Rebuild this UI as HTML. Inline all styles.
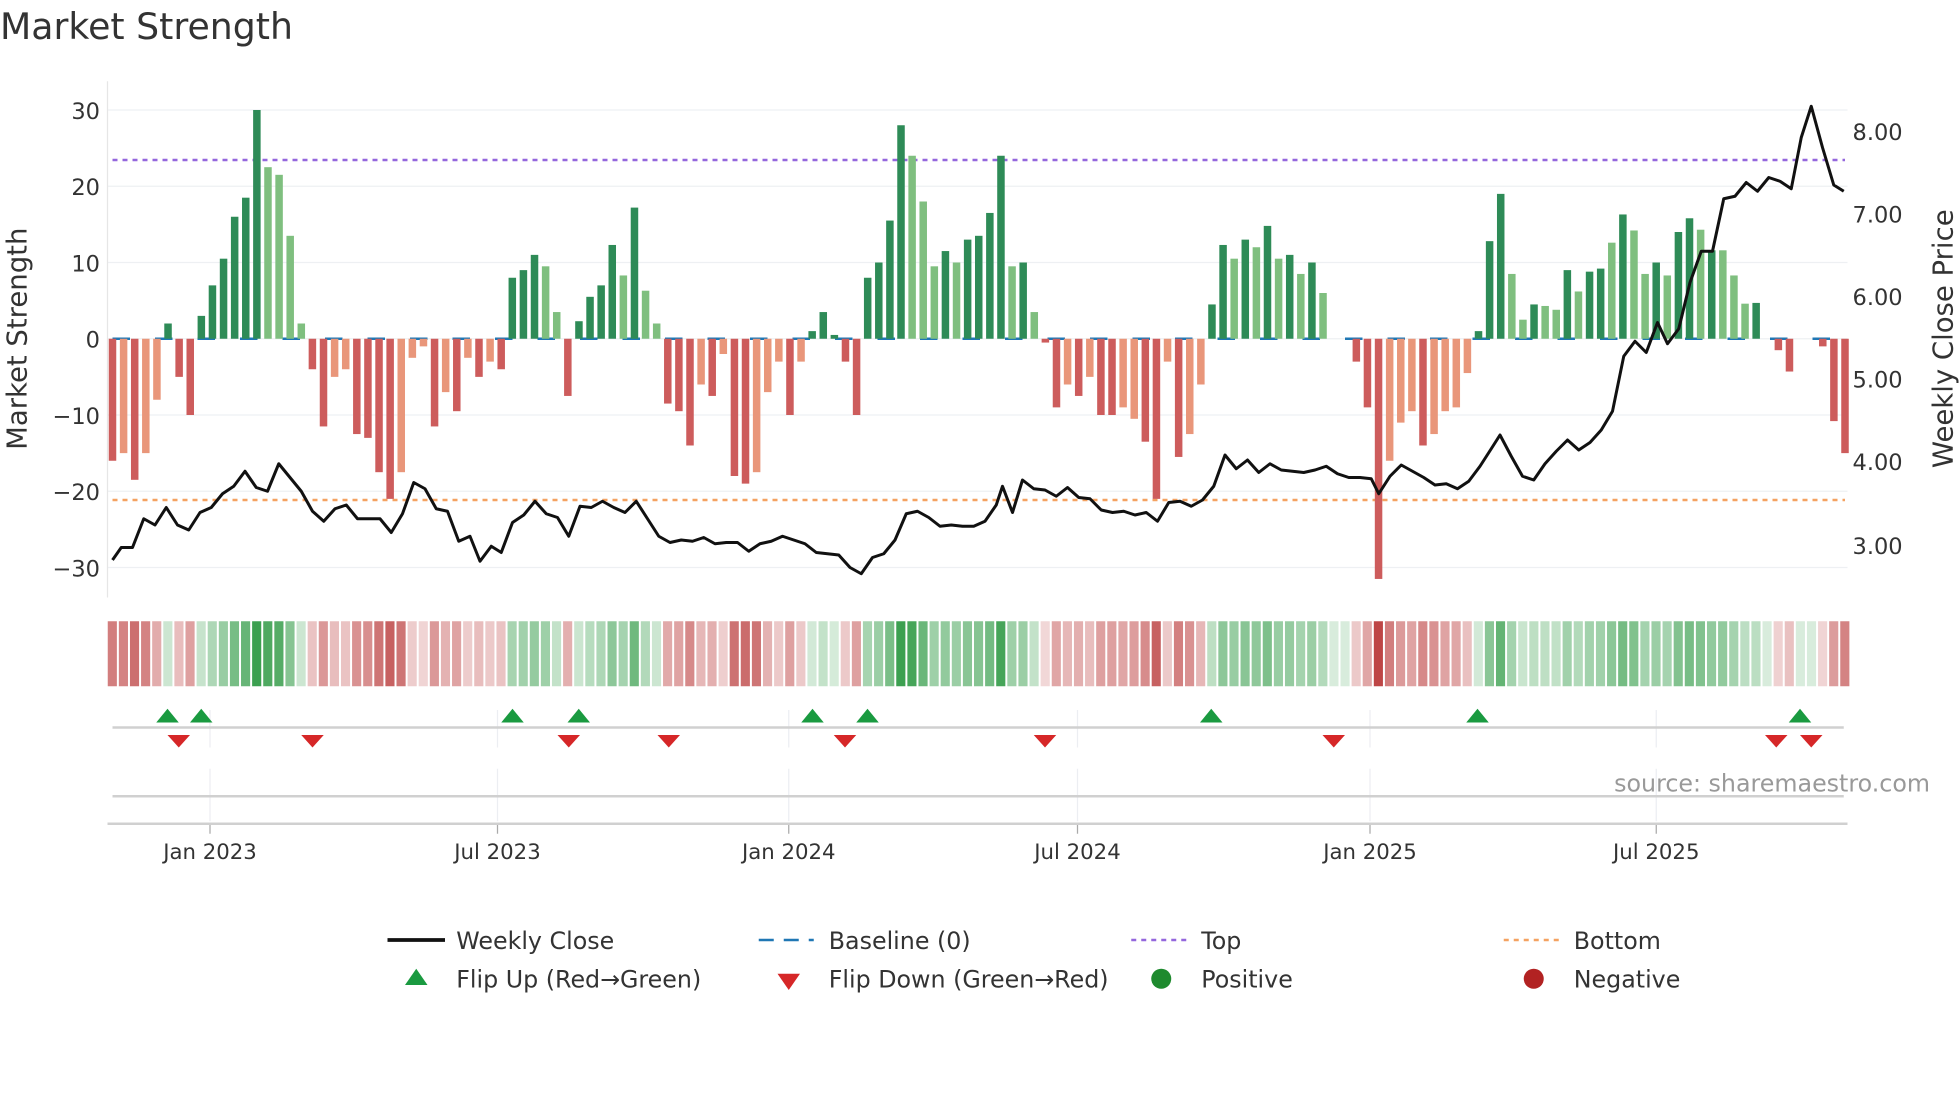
<!DOCTYPE html>
<html><head><meta charset="utf-8"><style>
html,body{margin:0;padding:0;background:#fff;width:1960px;height:1102px;overflow:hidden}
svg{display:block}
text{font-family:"DejaVu Sans","Liberation Sans",sans-serif;fill:#333}
</style></head><body>
<svg id="s" width="1960" height="1102" viewBox="0 0 1568 881.6" xmlns="http://www.w3.org/2000/svg">
<text x="0" y="31" font-size="29">Market Strength</text>
<g id="grid"></g>
<g id="bars"></g>
<g id="heat"></g>
<g id="flips"></g>
<polyline id="close" fill="none" stroke="#111" stroke-width="2.4" stroke-linejoin="round"/>
<text x="1544" y="633" font-size="19" text-anchor="end" fill="#999" style="fill:#999">source: sharemaestro.com</text>
<g id="legend" font-size="19">
<line x1="310" y1="752" x2="356" y2="752" stroke="#111" stroke-width="3"/><text x="365" y="759" font-size="19">Weekly Close</text>
<line x1="607" y1="752" x2="651" y2="752" stroke="#1f77b4" stroke-width="2" stroke-dasharray="12 8"/><text x="663" y="759" font-size="19">Baseline (0)</text>
<line x1="905" y1="752" x2="949" y2="752" stroke="#9467dd" stroke-width="2" stroke-dasharray="4 4"/><text x="961" y="759" font-size="19">Top</text>
<line x1="1203" y1="752" x2="1247" y2="752" stroke="#f4a261" stroke-width="2" stroke-dasharray="4 4"/><text x="1259" y="759" font-size="19">Bottom</text>
<polygon points="324,788 342,788 333,775" fill="#1a9a40"/><text x="365" y="790" font-size="19">Flip Up (Red→Green)</text>
<polygon points="622,779 640,779 631,792" fill="#d62728"/><text x="663" y="790" font-size="19">Flip Down (Green→Red)</text>
<circle cx="929" cy="783" r="8" fill="#1e8a2e"/><text x="961" y="790" font-size="19">Positive</text>
<circle cx="1227" cy="783" r="8" fill="#b22222"/><text x="1259" y="790" font-size="19">Negative</text>
</g>
</svg>
<script>
const NS="http://www.w3.org/2000/svg";
function el(p,t,a,txt){const e=document.createElementNS(NS,t);for(const k in a)e.setAttribute(k,a[k]);if(txt!=null)e.textContent=txt;p.appendChild(e);return e;}
const g=document.getElementById('grid');
const Y0=271,SC=6.1;
[30,20,10,0,-10,-20,-30].forEach(v=>{const y=Y0-v*SC;el(g,'line',{x1:86,x2:1478,y1:y,y2:y,stroke:'#eef0f3','stroke-width':1});
el(g,'text',{x:80,y:y+7,'font-size':18,'text-anchor':'end'},v<0?'\u2212'+(-v):String(v));});
[[8,105],[7,171],[6,237],[5,303],[4,369],[3,436]].forEach(([v,y])=>el(g,'text',{x:1482,y:y+7,'font-size':18},v.toFixed(2)));
el(g,'line',{x1:86,x2:86,y1:65,y2:478,stroke:'#e6e6e6'});
el(g,'text',{x:0,y:0,'font-size':22,'text-anchor':'middle',transform:'translate(21,271) rotate(-90)'},'Market Strength');
el(g,'text',{x:0,y:0,'font-size':22,'text-anchor':'middle',transform:'translate(1562,271) rotate(-90)'},'Weekly Close Price');
el(g,'line',{x1:90,x2:1476,y1:128,y2:128,stroke:'#9467dd','stroke-width':2,'stroke-dasharray':'4 4'});
el(g,'line',{x1:90,x2:1476,y1:400,y2:400,stroke:'#f4a261','stroke-width':2,'stroke-dasharray':'4 4'});
const ticks=[[168,'Jan 2023'],[398,'Jul 2023'],[631,'Jan 2024'],[862,'Jul 2024'],[1096,'Jan 2025'],[1325,'Jul 2025']];
ticks.forEach(([x,l])=>{el(g,'line',{x1:x,x2:x,y1:568,y2:598,stroke:'#eceef2'});el(g,'line',{x1:x,x2:x,y1:615,y2:657,stroke:'#eceef2'});
el(g,'line',{x1:x,x2:x,y1:659,y2:667,stroke:'#aaa'});el(g,'text',{x:x,y:687,'font-size':17,'text-anchor':'middle'},l);});
el(g,'line',{x1:90,x2:1475,y1:582,y2:582,stroke:'#d0d0d0','stroke-width':2});
el(g,'line',{x1:90,x2:1475,y1:637,y2:637,stroke:'#d0d0d0','stroke-width':2});
el(g,'line',{x1:86,x2:1478,y1:659,y2:659,stroke:'#d0d0d0','stroke-width':2});
const B="-16r -15o -18.5r -15o -8o 2d -5r -10r 3d 7d 10.5d 16d 18.5d 30d 22.5l 21.5l 13.5l 2l -4r -11.5r -5o -4o -12.5r -13r -17.5r -21r -17.5o -2.5o -1o -11.5r -7o -9.5r -2.5o -5r -3o -4r 8d 9d 11d 9.5l 3.5l -7.5r 2.3d 5.5d 7d 12.3d 8.3l 17.2d 6.3l 2l -8.5r -9.5r -14r -6o -7.5r -2o -18r -19r -17.5o -7o -3o -10r -3o 1d 3.5d 0.5d -3r -10r 8d 10d 15.5d 28d 24l 18l 9.5l 11.5d 10l 13d 13.5d 16.5d 24d 9.5l 10d 3.5l -0.5r -9r -6o -7.5r -5o -10r -10r -9o -10.5o -13.5r -21r -3o -15.5r -12.5o -6o 4.5d 12.3d 10.5l 13d 12l 14.8d 10.5l 11d 8.5l 10d 6l 0d 0d -3r -9r -31.5r -16o -11o -9.5o -14r -12.5o -9.5o -9o -4.5o 1d 12.8d 19d 8.5l 2.5l 4.5d 4.3l 3.8l 9d 6.2l 8.8d 9.2d 12.6l 16.3d 14.2l 8.5l 10d 8.3l 14d 15.8d 14.3l 11.6d 11.6l 8.3l 4.6l 4.7d 0d -1.5r -4.3r 0d 0d -1r -10.8r -15r".split(' ');
const col={d:'#2e8b57',l:'#7fbf7f',r:'#cd5c5c',o:'#e9967a'};
const bg=document.getElementById('bars'),hg=document.getElementById('heat');
const n=B.length,step=(1476-90)/(n-1);
el(bg,'line',{x1:90,x2:1476,y1:Y0,y2:Y0,stroke:'#1f77b4','stroke-width':2,'stroke-dasharray':'14 20'});
function mix(c,t){return 'rgb('+c.map(v=>Math.round(255+(v-255)*t)).join(',')+')';}
B.forEach((s,i)=>{const v=parseFloat(s),t=s.slice(-1),x=90+i*step;
 if(Math.abs(v)>0.05){const h=Math.abs(v)*SC;el(bg,'rect',{x:x-3,y:v>0?Y0-h:Y0,width:6,height:h,fill:col[t]});}
 const a=Math.min(1,0.2+Math.abs(v)/32);
 el(hg,'rect',{x:x-3.8,y:497,width:7.3,height:52,fill:v>=0?mix([60,160,80],a):mix([190,70,70],a)});
});
const P=[[90,448],[97,438],[106,438],[115,415],[124,420],[133,406],[142,420],[151,424],[160,410],[169,406],[178,395],[187,389],[196,377],[205,390],[214,393],[223,371],[232,382],[241,393],[250,409],[259,417],[268,407],[277,404],[286,415],[295,415],[304,415],[313,426],[322,411],[331,386],[340,391],[349,407],[358,409],[367,433],[376,429],[384,449],[393,437],[401,442],[410,418],[419,412],[428,401],[437,411],[446,414],[455,429],[464,405],[473,406],[482,401],[491,406],[500,410],[509,401],[518,415],[527,429],[536,434],[545,432],[554,433],[563,430],[572,435],[581,434],[590,434],[599,441],[608,435],[617,433],[626,429],[635,432],[644,435],[653,442],[662,443],[671,444],[680,454],[689,459],[698,446],[707,443],[716,432],[725,411],[734,409],[743,414],[752,421],[761,420],[770,421],[779,421],[788,417],[797,404],[802,389],[810,410],[818,384],[827,391],[836,392],[845,397],[854,390],[863,398],[872,399],[881,408],[890,410],[899,409],[908,412],[917,410],[926,417],[935,402],[944,401],[953,405],[962,400],[971,389],[980,364],[989,375],[998,368],[1007,378],[1016,371],[1025,376],[1034,377],[1043,378],[1052,376],[1061,373],[1070,379],[1079,382],[1088,382],[1097,383],[1103,395],[1112,381],[1121,372],[1130,377],[1139,382],[1148,388],[1157,387],[1166,391],[1175,385],[1184,373],[1193,359],[1200,348],[1209,365],[1218,381],[1227,384],[1236,371],[1245,361],[1254,352],[1263,360],[1272,354],[1281,344],[1290,329],[1299,285],[1308,273],[1317,282],[1326,258],[1334,275],[1343,263],[1352,226],[1361,201],[1370,201],[1379,159],[1388,157],[1397,146],[1406,153],[1415,142],[1424,145],[1433,151],[1441,110],[1449,85],[1458,118],[1467,148],[1475,153]];
document.getElementById('close').setAttribute('points',P.map(p=>p.join(',')).join(' '));
const fg=document.getElementById('flips');
[134,161,410,463,650,694,969,1182,1440].forEach(x=>el(fg,'polygon',{points:`${x-9},578 ${x+9},578 ${x},567`,fill:'#1a9a40'}));
[143,250,455,535,676,836,1067,1421,1449].forEach(x=>el(fg,'polygon',{points:`${x-9},588 ${x+9},588 ${x},598`,fill:'#d62728'}));
</script>
</body></html>
